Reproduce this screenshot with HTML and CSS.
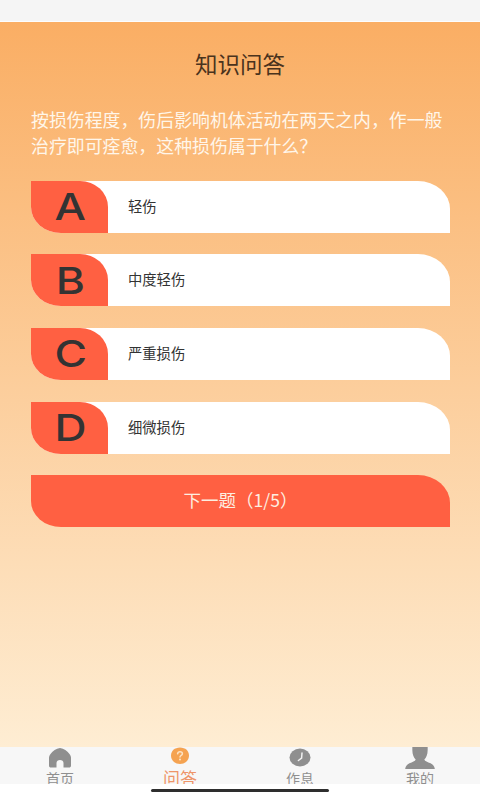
FILE: index.html
```html
<!DOCTYPE html>
<html lang="zh">
<head>
<meta charset="utf-8">
<title>知识问答</title>
<link rel="stylesheet" href="styles.css">
</head>
<body>
<div class="status"></div>
<main class="page">
  <h1 class="title">知识问答</h1>
  <p class="question">按损伤程度，伤后影响机体活动在两天之内，作一般治疗即可痊愈，这种损伤属于什么？</p>
  <div class="options">
    <div class="option"><div class="letter"><span>A</span></div><div class="label">轻伤</div></div>
    <div class="option"><div class="letter"><span>B</span></div><div class="label">中度轻伤</div></div>
    <div class="option"><div class="letter"><span>C</span></div><div class="label">严重损伤</div></div>
    <div class="option"><div class="letter"><span>D</span></div><div class="label">细微损伤</div></div>
  </div>
  <div class="next">下一题（1/5）</div>
</main>
<nav class="tabs">
  <div class="tab">
    <svg class="icon" viewBox="0 0 24 22" width="24" height="22"><path fill="#8f8f8f" d="M12 0.5 C8 1 5 3.5 2.5 6.5 C1.5 7.8 1 9 1 10.5 V18 C1 19.5 1.8 20 3 20 H8.5 V15.5 C8.5 13.5 10 12.5 12 12.5 C14 12.5 15.5 13.5 15.5 15.5 V20 H21 C22.2 20 23 19.5 23 18 V10.5 C23 9 22.5 7.8 21.5 6.5 C19 3.5 16 1 12 0.5 Z"/></svg>
    <span class="tab-text">首页</span>
  </div>
  <div class="tab active">
    <svg class="icon" viewBox="0 0 24 22" width="24" height="22"><path fill="#f5a351" d="M12 0 C17.6 0 21 3.6 21 8 C21 12.8 17.4 16.5 12 16.5 C6.6 16.5 3 12.8 3 8 C3 3.6 6.4 0 12 0 Z"/><path fill="none" stroke="#fde3c4" stroke-width="1.5" stroke-linecap="round" d="M9.6 6.3 C9.8 4.8 10.8 4.2 12 4.2 C13.4 4.2 14.4 5 14.4 6.2 C14.4 7.8 12 8 12 9.6"/><circle cx="12" cy="12" r="1" fill="#fde3c4"/></svg>
    <span class="tab-text">问答</span>
  </div>
  <div class="tab">
    <svg class="icon" viewBox="0 0 24 22" width="24" height="22"><ellipse cx="12" cy="10" rx="10.5" ry="9" fill="#8f8f8f"/><path fill="none" stroke="#f1f1f1" stroke-width="1.5" stroke-linecap="round" d="M14 5.5 L13.6 10.6 L10.4 13"/></svg>
    <span class="tab-text">作息</span>
  </div>
  <div class="tab">
    <svg class="icon" viewBox="0 0 32 24" width="32" height="24"><path fill="#8f8f8f" d="M8 0 H24 V3 C24 8 22.5 11 20.5 13 C21 15 24 15.5 27 17 C29.5 18 31 20 31.5 23 H0.5 C1 20 2.5 18 5 17 C8 15.5 11 15 11.5 13 C9.5 11 8 8 8 3 Z"/></svg>
    <span class="tab-text">我的</span>
  </div>
</nav>
<div class="home"><div class="pill"></div></div>
</body>
</html>
```

FILE: styles.css
```css
* { box-sizing: border-box; }
html, body { margin: 0; padding: 0; }
body {
  width: 480px;
  height: 800px;
  overflow: hidden;
  display: flex;
  flex-direction: column;
  background: #fff;
  font-family: "Noto Sans CJK SC", "Noto Sans", sans-serif;
}
.status {
  height: 22px;
  flex: none;
  background: #f5f5f5;
  border-bottom: 1px solid #fdfdfd;
}
.page {
  height: 725px;
  flex: none;
  padding: 0 30px 0 31px;
  background: linear-gradient(180deg, #faae64 0%, #feedd3 100%);
}
.title {
  margin: 0 0 0 -1px;
  padding-top: 25px;
  height: 77px;
  line-height: 33px;
  font-size: 22.5px;
  font-weight: 400;
  text-align: center;
  color: #4a331d;
}
.question {
  margin: 0;
  padding-top: 8px;
  height: 81.8px;
  width: 419px;
  font-size: 17.9px;
  font-weight: 400;
  line-height: 25.5px;
  color: #fff6ea;
}
.options { display: flex; flex-direction: column; gap: 21.6px; }
.option {
  display: flex;
  align-items: center;
  height: 52px;
  background: #fff;
  border-radius: 0 32px 0 30px / 0 28px 0 26px;
}
.letter {
  width: 77px;
  height: 52px;
  flex: none;
  display: flex;
  align-items: center;
  justify-content: center;
  background: #ff6042;
  border-radius: 0 28px 0 30px / 0 26px 0 26px;
  color: #333;
  font-family: Inter, "Liberation Sans", sans-serif;
  font-weight: 500;
  font-size: 37px;
}
.letter span { display: block; transform: scaleX(1.2) translateX(1px); }
.label {
  padding: 0 0 3px 20px;
  font-size: 14.3px;
  font-weight: 400;
  color: #333;
}
.next {
  margin-top: 21.4px;
  height: 52px;
  padding-bottom: 2px;
  display: flex;
  align-items: center;
  justify-content: center;
  background: #ff6042;
  border-radius: 0 32px 0 30px / 0 28px 0 26px;
  font-size: 17.5px;
  font-weight: 400;
  color: #fdeee0;
}
.tabs {
  height: 37px;
  flex: none;
  display: grid;
  grid-template-columns: repeat(4, 1fr);
  background: #f7f7f7;
  overflow: hidden;
}
.tab {
  display: flex;
  flex-direction: column;
  align-items: center;
  height: 50px;
  color: #8f8f8f;
}
.icon { display: block; flex: none; height: 23px; }
.tab-text { font-size: 14px; line-height: 16px; font-weight: 400; }
.active { color: #ee9468; }
.active .tab-text { font-size: 17px; line-height: 16px; }
.home {
  height: 16px;
  flex: none;
  background: #fff;
  display: flex;
  justify-content: center;
  padding-top: 5px;
}
.pill { width: 178px; height: 3px; border-radius: 2px; background: #2e2e2e; }
```
